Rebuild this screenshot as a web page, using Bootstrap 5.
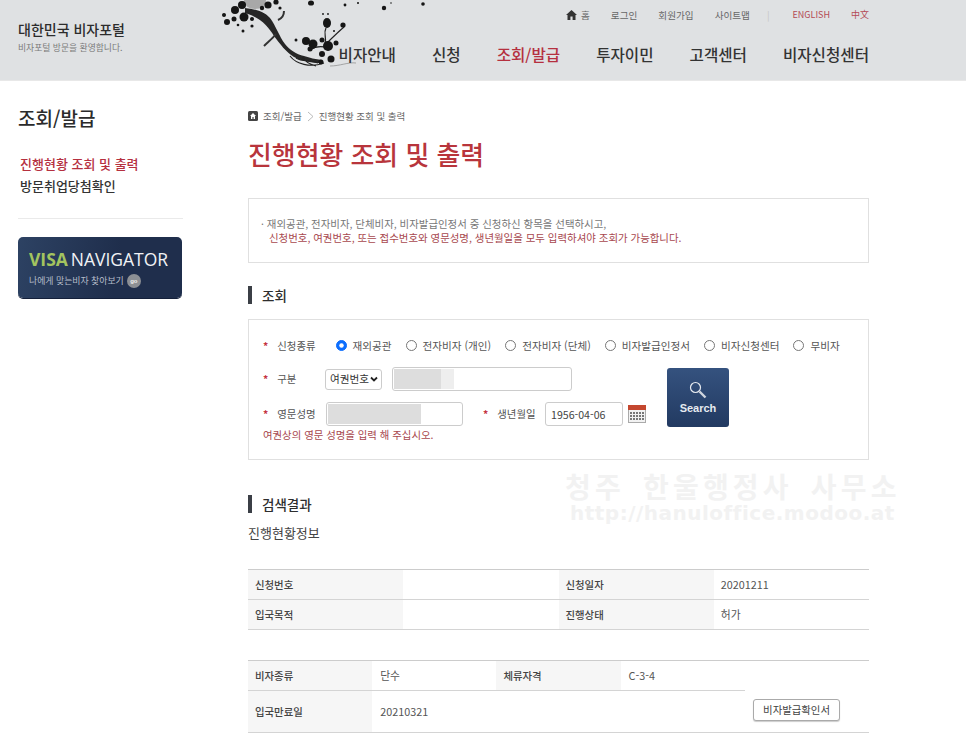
<!DOCTYPE html>
<html lang="ko">
<head>
<meta charset="utf-8">
<title>진행현황 조회 및 출력</title>
<link rel="stylesheet" href="https://cdn.jsdelivr.net/npm/bootstrap@5.3.0/dist/css/bootstrap.min.css">
<style>
html,body{height:743px;overflow:hidden}
body{font-family:"Noto Sans CJK KR","Liberation Sans",sans-serif;color:#333;font-size:10px;background:#fff}
.site-header{height:81px;background:#dfe1e3;border-bottom:1px solid #e8e8e8;padding:0 97px 0 18px}
.brand{padding-top:19px;width:200px}
.brand strong{display:block;font-size:14px;line-height:20px;font-weight:500;color:#2c2c2c}
.brand small{display:block;font-size:8.8px;line-height:14px;color:#7a7a7a;margin-top:2px}
.tree{position:absolute;left:218px;top:0}
.util{height:30px;gap:21px;font-size:9.6px;color:#666}
.util .sep{color:#c6c6c6;margin:0 2px 0 -4px}
.util .red{color:#b44a55;font-size:9px}
.gnb{gap:36px;font-size:15.6px;font-weight:500;color:#333;height:49px;line-height:1}
.gnb .active{color:#b5303f}
.page{padding:0 97px 0 18px;gap:65px}
.side{width:165px;flex:none;padding-top:23px}
.side h2{font-size:19px;font-weight:500;line-height:28px;color:#2b2b2b;margin:0 0 21px}
.side ul{margin:0;padding:0 0 0 2px;list-style:none;font-size:13px;line-height:22px;font-weight:500}
.side li.on{color:#b5303f}
.side hr{margin:21px 0 18px;border-color:#aaa;width:165px}
.navi{width:164px;height:61px;border-radius:5px;background:linear-gradient(100deg,#2d4263,#1f2e4c 60%);padding:11px 11px 0;color:#fff;box-shadow:0 1px 0 #14203a}
.navi .h{white-space:nowrap;line-height:22px}
.navi b{font:700 17.5px/22px "Open Sans","Liberation Sans",sans-serif;color:#a3c45f}
.navi span.t{font:400 17.5px/22px "Open Sans","Liberation Sans",sans-serif;color:#f0f2f5}
.navi div.s{font-size:8.9px;line-height:14px;color:#b6bdc9;margin-top:1px;display:flex;align-items:center;gap:3px;white-space:nowrap}
.navi i{font:700 6px/14px "Liberation Sans",sans-serif;width:14px;height:14px;border-radius:50%;background:#8c8f94;color:#eee;text-align:center;display:inline-block;flex:none}
.content{width:621px;flex:none;padding-top:27px}
.crumb{font-size:9.5px;line-height:16px;color:#666;gap:5px}
.content h1{font-size:25.9px;line-height:38px;font-weight:500;color:#b8353c;margin:11px 0 25px}
.notice{height:65px;border:1px solid #e0e0e0;padding:18px 12px 0;font-size:10.45px;line-height:13.5px;color:#777}
.notice p{margin:0;color:#a8484e;padding-left:8px}
.sec{font-size:13.5px;line-height:18px;font-weight:500;color:#2e2e2e;border-left:4px solid #3b3f46;padding-left:10px;margin:0}
.sec-a{margin-top:23px;margin-bottom:15px}
.sec-b{margin-top:35px}
.box{height:141px;border:1px solid #e0e0e0;padding:0 14px}
.lbl{font-size:10.4px;color:#555;white-space:nowrap}
.lbl::before{content:"*";color:#c5323f;font-weight:700;margin-right:9px}
.lbl-kind{margin-right:6px}
.lbl-div{width:62px}
.lbl-name{width:63px}
.lbl-birth{margin-left:20px;width:62px}
.radios{height:47px;padding-top:4px;gap:14px}
.fc-first{margin-right:-4px}
.form-check{margin:0;min-height:0;padding-left:17px;font-size:10.6px;color:#555;line-height:14px}
.form-check .form-check-input{width:11px;height:11px;margin:1px 0 0 -17px;border-color:#777}
.form-check .form-check-input:checked{border-color:#0d6efd}
.row-h{height:24px}
.row-gap{margin-top:11px}
.field{height:24px;font-size:10.6px;border-color:#ccc;border-radius:3px;padding:0 5px;color:#444;box-shadow:none;min-height:0}
select.field{height:21px;width:57px;padding:0 1px 0 4px;background-image:url("data:image/svg+xml,%3csvg xmlns='http://www.w3.org/2000/svg' viewBox='0 0 16 16'%3e%3cpath fill='none' stroke='%23222' stroke-width='3.6' d='m2 5 6 6 6-6'/%3e%3c/svg%3e");background-position:right 3px center;background-size:8px 8px;color:#333}
.in-a{margin-left:10px;width:180px}
.in-b{width:137px}
.in-c{width:78px}
.cal{margin-left:5px}
.mask{position:absolute;top:2px;bottom:2px;left:2px;background:#ddd}
.mask-a{width:47px}
.mask-b{width:93px}
.mask-a::after{content:"";position:absolute;top:0;bottom:0;left:100%;background:#eee;width:13px}
.hint{font-size:10.4px;line-height:14px;color:#a8484e;margin-top:2px}
.search{position:absolute;left:418px;top:48px;width:62px;height:59px;border-radius:3px;background:linear-gradient(#35527f,#223a61);border:0;color:#e6eaf0;font:700 11px/12px "Liberation Sans",sans-serif;padding:12px 0 0;display:flex;flex-direction:column;align-items:center;gap:2px}
.search:hover{color:#e6eaf0}
.watermark{position:absolute;left:565px;top:470px;white-space:nowrap;color:#f2f2f2;font-weight:700;pointer-events:none}
.wm-a{font-size:28px;line-height:32px;letter-spacing:4.2px;word-spacing:6px}
.wm-b{font:700 20px/22px "DejaVu Sans","Liberation Sans",sans-serif;letter-spacing:.5px;margin:0 0 0 5px}
.sub{font-size:13px;line-height:18px;color:#444;margin:11px 0 27px;font-weight:400}
.tbl{table-layout:fixed;margin:0;font-size:10.8px;color:#555;border-top:1px solid #ccc}
.tbl td,.tbl th{padding:0 7px;vertical-align:middle;height:30px;border-bottom:1px solid #d4d4d4;font-weight:400;color:#555}
.tbl th{background:#f6f6f6;font-weight:500;color:#444;font-size:10.4px}
.t2{margin-top:30px}
.t2 td{padding-left:8px}
.t2 .tall>*{height:42px}
.t2 td.act{padding:0 29px 9px 0;text-align:right;vertical-align:bottom}
.btn-doc{font-size:10.4px;line-height:14px;padding:3px 9px;border:1px solid #aaa;border-radius:3px;color:#444;background:#fff;white-space:nowrap;box-shadow:0 1px 1px #ccc;margin-bottom:2px}
</style>
</head>
<body>
<header class="site-header position-relative d-flex justify-content-between">
  <div class="brand"><strong>대한민국 비자포털</strong><small>비자포털 방문을 환영합니다.</small></div>
  <svg class="tree" width="210" height="70" viewBox="0 0 210 70" aria-hidden="true">
    <defs><filter id="ink" x="-5%" y="-5%" width="110%" height="110%"><feGaussianBlur stdDeviation=".45"/></filter></defs>
    <g filter="url(#ink)">
      <ellipse cx="37" cy="1" rx="11" ry="8" fill="#a8a8a8"/>
      <path d="M27 8C36 9 46 11 52 18C58 26 61 36 67 44C72 50 78 54 86 56C92 58 97 59 104 60L104 63C94 63 84 61 76 57C68 52 62 44 56 36C51 28 44 18 27 13Z" fill="#262626"/>
      <path d="M58 34C55 38 50 42 46 46M60 20C65 18 66 14 66 11" fill="none" stroke="#333" stroke-width="2"/>
      <path d="M72 56C78 64 92 68 106 63M78 58C84 62 92 60 100 63M84 57C88 63 94 65 98 66" fill="none" stroke="#222" stroke-width="1.1"/>
      <path d="M107 44C109 36 105 34 108 28M108 44C114 38 120 32 126 27M92 50C98 46 104 46 110 48" fill="none" stroke="#222" stroke-width="1.2"/>
      <path d="M112 66C122 66 130 62 138 63" fill="none" stroke="#888" stroke-width=".7"/>
      <g fill="#141414">
        <circle cx="6" cy="15" r="2"/><circle cx="9" cy="22" r="3"/><circle cx="17" cy="10" r="4"/><circle cx="24" cy="5" r="4"/><circle cx="26" cy="17" r="4.5"/><circle cx="16" cy="19" r="2.5"/><circle cx="34" cy="19" r="2"/><circle cx="25" cy="31" r="1.5"/><circle cx="34" cy="26" r="1.6"/><circle cx="20" cy="25" r="1.3"/>
        <circle cx="50" cy="5" r="3.6"/><circle cx="58" cy="2" r="2.6"/><circle cx="62" cy="8" r="1.6"/><circle cx="44" cy="8" r="2.2"/>
        <ellipse cx="93" cy="3" rx="3" ry="2.6"/><circle cx="127" cy="5" r="1.4"/><circle cx="140" cy="3" r="1"/><circle cx="166" cy="8" r="2.2"/><circle cx="173" cy="3" r=".8"/><circle cx="205" cy="4" r="1.8"/>
        <ellipse cx="109" cy="23" rx="4" ry="5"/><circle cx="125" cy="25" r="2.6"/><circle cx="105" cy="14" r=".9"/><circle cx="110" cy="14" r=".9"/><circle cx="116" cy="31" r="1"/>
        <circle cx="78" cy="40" r="1.5"/><circle cx="88" cy="41" r="4"/><circle cx="95" cy="44" r="4.5"/><circle cx="104" cy="40" r="2.5"/><circle cx="110" cy="46" r="5"/><circle cx="118" cy="43" r="2.5"/><circle cx="92" cy="49" r="2.5"/><circle cx="113" cy="59" r="3.5"/><circle cx="104" cy="54" r="3"/><circle cx="103" cy="62" r="2.5"/>
      </g>
    </g>
  </svg>
  <div class="position-relative">
    <div class="util d-flex justify-content-end align-items-center">
      <span class="d-flex align-items-center gap-1"><svg width="11" height="10" viewBox="0 0 11 10" aria-hidden="true"><path d="M5.5 0 11 5H9.5v5H6.6V6.6H4.4V10H1.5V5H0z" fill="#333"/></svg>홈</span>
      <span>로그인</span><span>회원가입</span><span>사이트맵</span><span class="sep">|</span><span class="red">ENGLISH</span><span class="red">中文</span>
    </div>
    <nav class="gnb d-flex align-items-center justify-content-end">
      <span>비자안내</span><span>신청</span><span class="active">조회/발급</span><span>투자이민</span><span>고객센터</span><span>비자신청센터</span>
    </nav>
  </div>
</header>
<div class="page d-flex position-relative">
  <aside class="side">
    <h2>조회/발급</h2>
    <ul><li class="on">진행현황 조회 및 출력</li><li>방문취업당첨확인</li></ul>
    <hr>
    <div class="navi">
      <div class="h"><b>VISA</b> <span class="t">NAVIGATOR</span></div>
      <div class="s">나에게 맞는비자 찾아보기 <i>go</i></div>
    </div>
  </aside>
  <main class="content">
    <div class="crumb d-flex align-items-center">
      <svg width="10" height="10" viewBox="0 0 10 10" aria-hidden="true"><rect width="10" height="10" rx="1.5" fill="#444"/><path d="M5 2 8 5H7v3H5.6V6H4.4v2H3V5H2z" fill="#fff"/></svg>
      <span>조회/발급</span><svg width="7" height="11" viewBox="0 0 7 11" aria-hidden="true"><path d="M1 1l5 4.5L1 10" fill="none" stroke="#aaa" stroke-width=".8"/></svg><span>진행현황 조회 및 출력</span>
    </div>
    <h1>진행현황 조회 및 출력</h1>
    <div class="notice">
      · 재외공관, 전자비자, 단체비자, 비자발급인정서 중 신청하신 항목을 선택하시고,
      <p>신청번호, 여권번호, 또는 접수번호와 영문성명, 생년월일을 모두 입력하셔야 조회가 가능합니다.</p>
    </div>
    <h2 class="sec sec-a">조회</h2>
    <div class="box position-relative">
      <div class="radios d-flex align-items-center">
        <span class="lbl lbl-kind">신청종류</span>
        <div class="form-check fc-first"><input class="form-check-input" type="radio" name="k" id="r1" checked><label for="r1">재외공관</label></div>
        <div class="form-check"><input class="form-check-input" type="radio" name="k" id="r2"><label for="r2">전자비자 (개인)</label></div>
        <div class="form-check"><input class="form-check-input" type="radio" name="k" id="r3"><label for="r3">전자비자 (단체)</label></div>
        <div class="form-check"><input class="form-check-input" type="radio" name="k" id="r4"><label for="r4">비자발급인정서</label></div>
        <div class="form-check"><input class="form-check-input" type="radio" name="k" id="r5"><label for="r5">비자신청센터</label></div>
        <div class="form-check"><input class="form-check-input" type="radio" name="k" id="r6"><label for="r6">무비자</label></div>
      </div>
      <div class="d-flex align-items-center row-h">
        <span class="lbl lbl-div">구분</span>
        <select class="form-select field"><option>여권번호</option></select>
        <div class="position-relative in-a"><input class="form-control field" type="text" aria-label="여권번호"><span class="mask mask-a"></span></div>
      </div>
      <div class="d-flex align-items-center row-h row-gap">
        <span class="lbl lbl-name">영문성명</span>
        <div class="position-relative in-b"><input class="form-control field" type="text" aria-label="영문성명"><span class="mask mask-b"></span></div>
        <span class="lbl lbl-birth">생년월일</span>
        <input class="form-control field in-c" type="text" value="1956-04-06" aria-label="생년월일">
        <svg class="cal" width="18" height="18" viewBox="0 0 18 18" aria-hidden="true"><rect x=".5" y=".5" width="17" height="17" fill="#f2f2f2" stroke="#aaa"/><rect width="18" height="5" fill="#c4472f"/><g fill="#777"><rect x="2" y="7" width="2" height="2"/><rect x="5" y="7" width="2" height="2"/><rect x="8" y="7" width="2" height="2"/><rect x="11" y="7" width="2" height="2"/><rect x="14" y="7" width="2" height="2"/><rect x="2" y="10" width="2" height="2"/><rect x="5" y="10" width="2" height="2"/><rect x="8" y="10" width="2" height="2"/><rect x="11" y="10" width="2" height="2"/><rect x="14" y="10" width="2" height="2"/><rect x="2" y="13" width="2" height="2"/><rect x="5" y="13" width="2" height="2"/><rect x="8" y="13" width="2" height="2"/><rect x="11" y="13" width="2" height="2"/><rect x="14" y="13" width="2" height="2"/></g></svg>
      </div>
      <div class="hint">여권상의 영문 성명을 입력 해 주십시오.</div>
      <button class="search btn" type="button"><svg width="20" height="20" viewBox="0 0 20 20" aria-hidden="true"><circle cx="7.5" cy="7.5" r="5" fill="none" stroke="#e6eaf0" stroke-width="1.2"/><path d="M11.5 11.5l6 6" stroke="#cfd5de" stroke-width="2.4"/></svg>Search</button>
    </div>
    <h2 class="sec sec-b">검색결과</h2>
    <h3 class="sub">진행현황정보</h3>
    <table class="table tbl">
      <tbody>
        <tr><th scope="row">신청번호</th><td></td><th scope="row">신청일자</th><td>20201211</td></tr>
        <tr><th scope="row">입국목적</th><td></td><th scope="row">진행상태</th><td>허가</td></tr>
      </tbody>
    </table>
    <table class="table tbl t2">
      <tbody>
        <tr><th scope="row">비자종류</th><td>단수</td><th scope="row">체류자격</th><td>C-3-4</td><td class="act" rowspan="2"><button class="btn-doc" type="button">비자발급확인서</button></td></tr>
        <tr class="tall"><th scope="row">입국만료일</th><td colspan="3">20210321</td></tr>
      </tbody>
    </table>
  </main>
</div>
<div class="watermark"><div class="wm-a">청주 한울행정사 사무소</div><div class="wm-b">http://hanuloffice.modoo.at</div></div>
<script src="https://cdn.jsdelivr.net/npm/bootstrap@5.3.0/dist/js/bootstrap.bundle.min.js"></script>
</body>
</html>
